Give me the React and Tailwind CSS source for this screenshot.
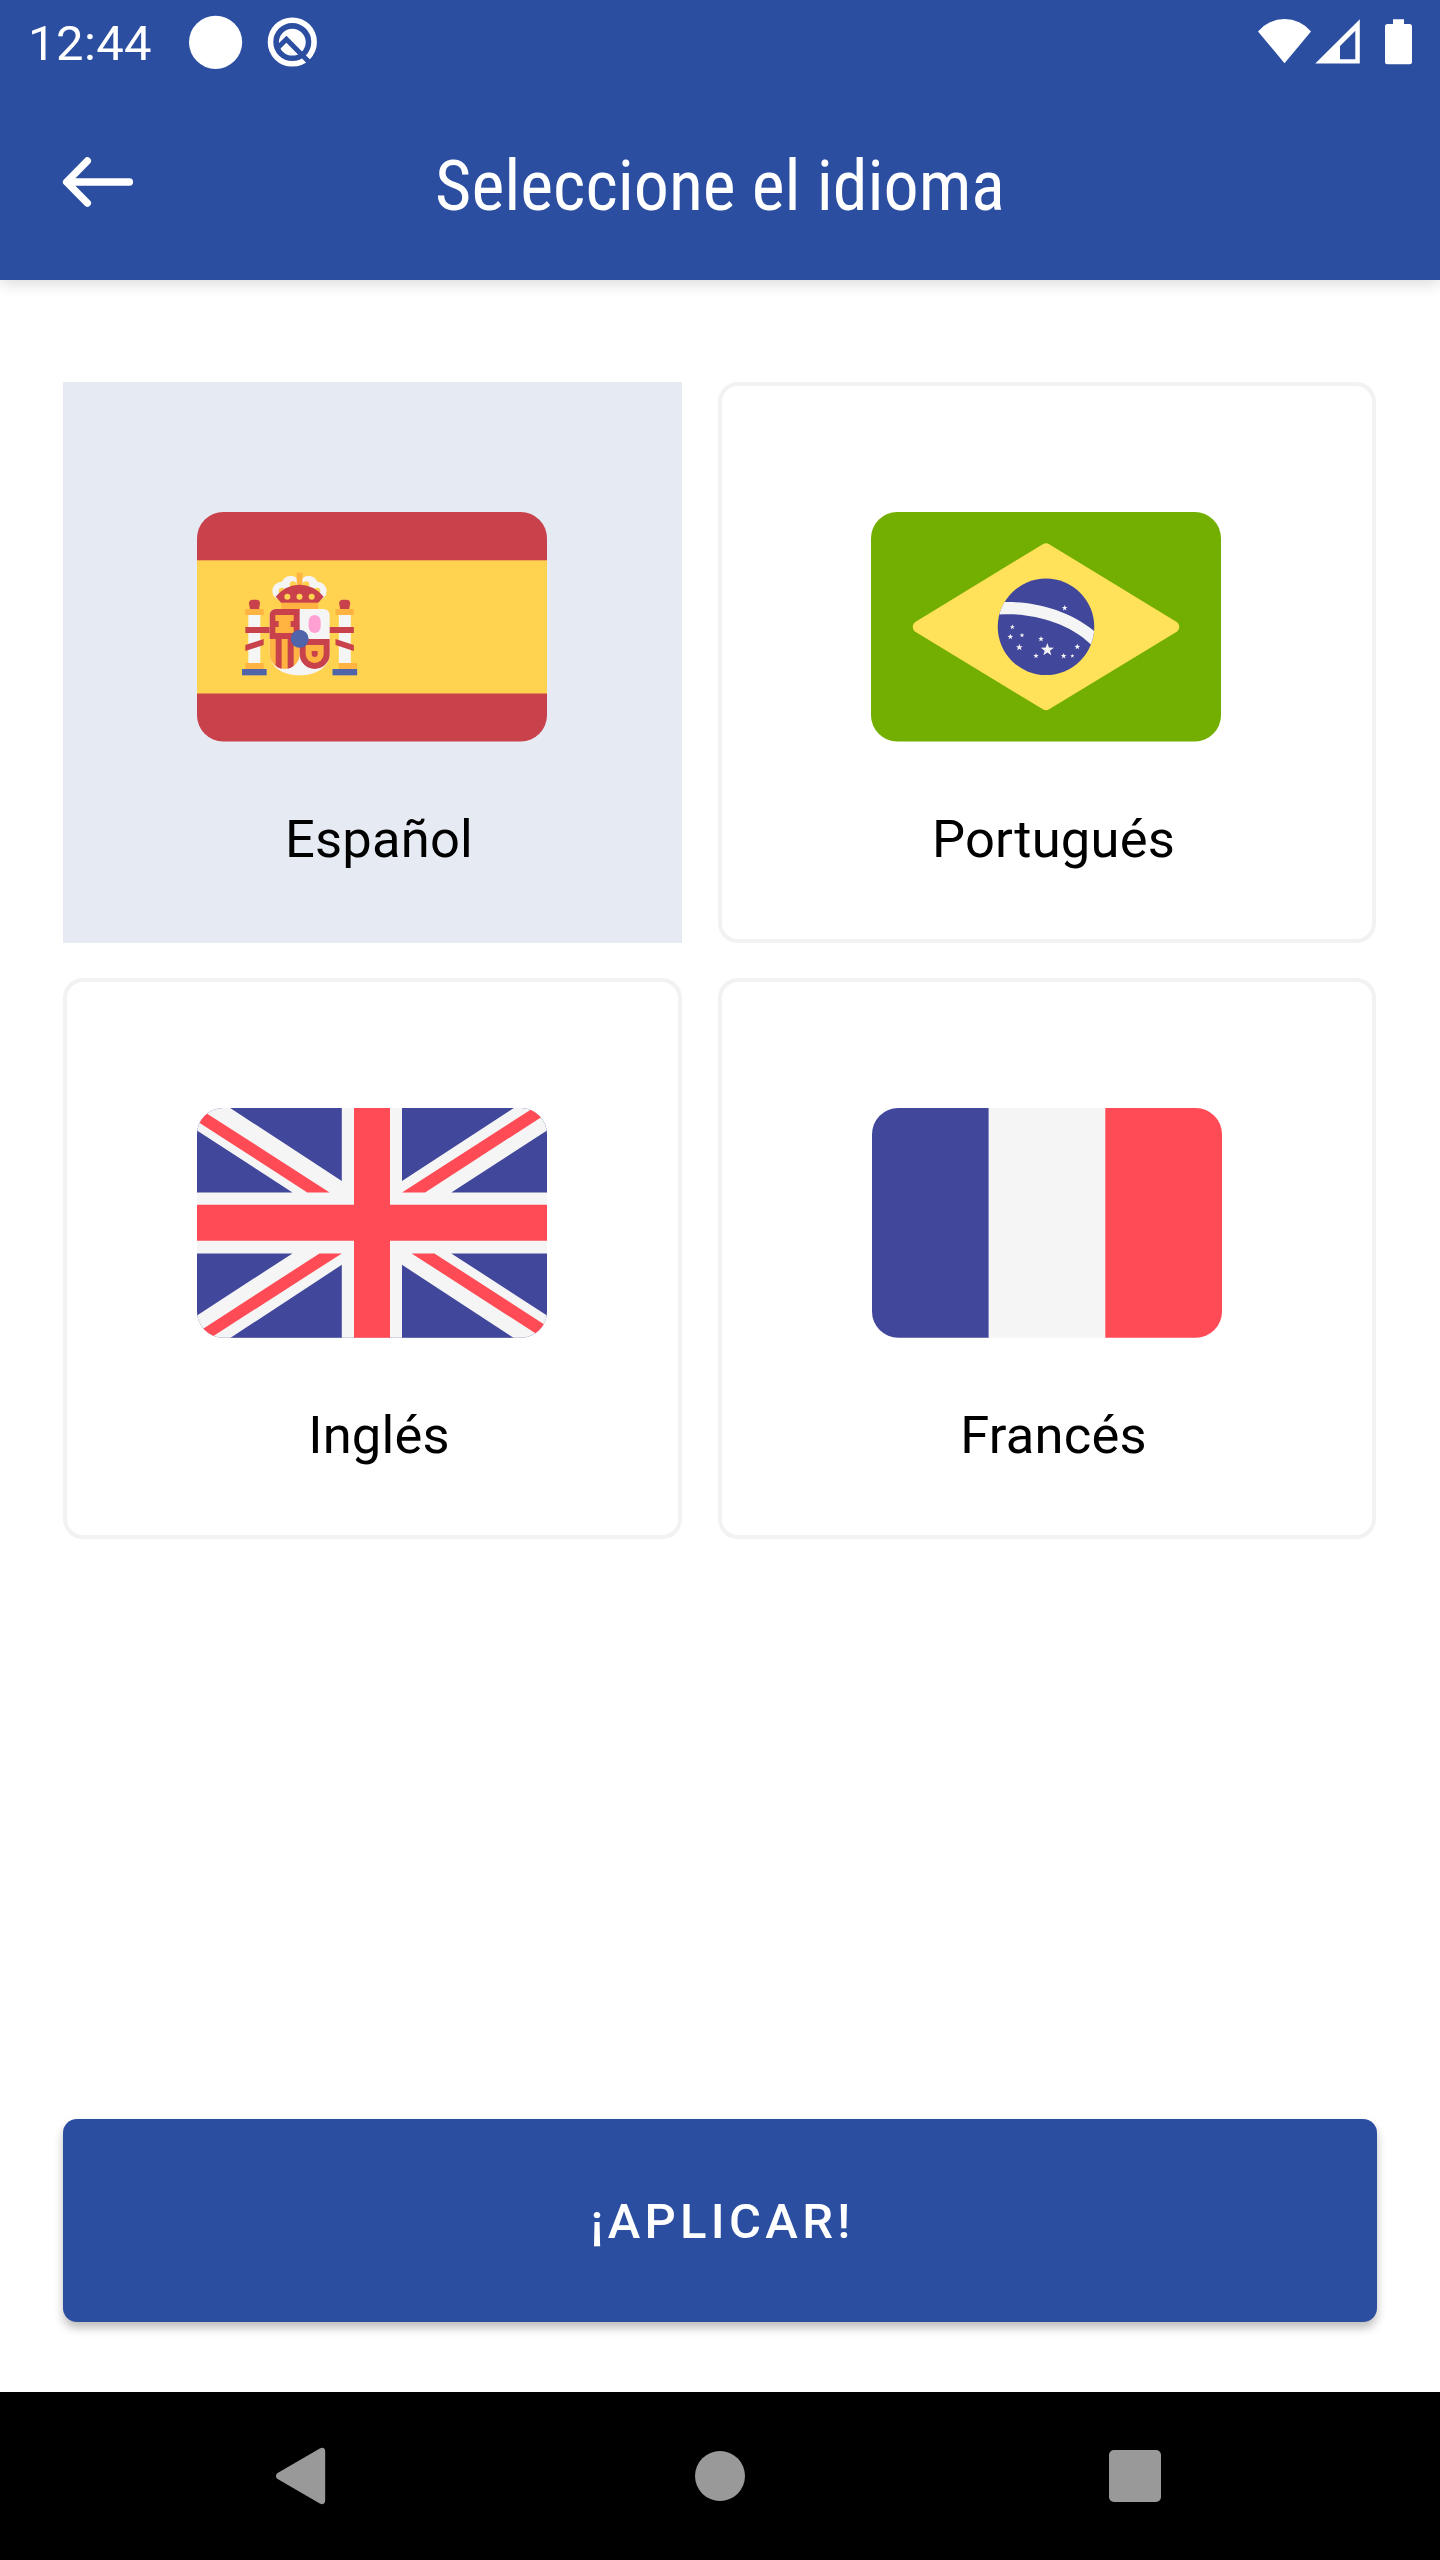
function StatusBar() {
  return (
    <div className="flex h-[84px] items-start pr-[28px] pl-[28px]">
      <span className="mt-[15px] w-[161px] text-[49px] leading-[58px] tracking-[0.4px]">12:44</span>
      <svg className="mt-[15px] h-[54px] w-[54px]" viewBox="0 0 54 54" fill="currentColor">
        <circle cx="26.6" cy="27.3" r="26.6" />
      </svg>
      <svg className="mt-[15px] ml-[23px] h-[54px] w-[54px]" viewBox="266 15 54 54" fill="none">
        <circle cx="292.3" cy="42" r="21.8" stroke="currentColor" strokeWidth="5.6" />
        <circle cx="292.3" cy="42.2" r="13.4" fill="currentColor" />
        <path d="M277.5 48 L286.4 39.2 L311 64" stroke="#2b4ea1" strokeWidth="5" />
      </svg>
      <svg className="mt-[15px] ml-auto h-[54px] w-[156px]" viewBox="1256 15 156 54" fill="currentColor">
        <path d="M1284.5 63.3 L1258 31.4 A34.7 34.7 0 0 1 1311 31.4 Z" />
        <path
          fillRule="evenodd"
          d="M1315.3 63.5 L1359.8 19.3 V63.5 Z M1340 46 V59.2 H1355.3 V30.7 Z"
        />
        <path d="M1393 19.3 H1404 V24 H1409.5 A2.5 2.5 0 0 1 1412 26.5 V61.8 A2.5 2.5 0 0 1 1409.5 64.3 H1387.5 A2.5 2.5 0 0 1 1385 61.8 V26.5 A2.5 2.5 0 0 1 1387.5 24 H1393 Z" />
      </svg>
    </div>
  );
}

function AppBar() {
  return (
    <div className="grid h-[196px] grid-cols-[80px_1fr_80px] items-start px-[60px]">
      <svg
        className="mt-[70px] h-[56px] w-[76px]"
        viewBox="60 154 76 56"
        fill="none"
        stroke="currentColor"
        strokeWidth="7.4"
        strokeLinecap="round"
        strokeLinejoin="round"
      >
        <path d="M129.4 182 H67 M87.3 161 L66.6 182 L87.3 203" />
      </svg>
      <h1 className="mt-[61px] text-center text-[70px] leading-[82px] whitespace-nowrap [font-family:'Roboto_Condensed',Roboto,sans-serif] [font-stretch:75%]">
        Seleccione el idioma
      </h1>
    </div>
  );
}

function Pillar({ mirrored }) {
  return (
    <g transform={mirrored ? "translate(477.5 0) scale(-1 1)" : undefined}>
      <path fill="#C8414B" d="M90 178 L87 160 Q87 149 98 149 H109 Q120 149 120 160 L117 178 Z" />
      <rect x="85" y="195" width="36" height="145" fill="#F5F5F5" />
      <rect x="76" y="177" width="55" height="18" fill="#FFB441" />
      <rect x={mirrored ? 66 : 76} y="339" width="55" height="18" fill="#FFB441" />
      <rect x="66" y="357" width="74" height="19" fill="#5064AA" />
      <rect x="76" y="231" width="74" height="18" fill="#C8414B" />
      <path fill="#C8414B" d="M76 285 L131 267 V285 L76 303 Z" />
    </g>
  );
}

function SpainFlag() {
  return (
    <svg className="h-[230px] w-[350px]" viewBox="0 0 350 230">
      <clipPath id="es-clip">
        <rect y="0.1" width="350" height="229.4" rx="26.2" />
      </clipPath>
      <g clipPath="url(#es-clip)">
        <rect width="350" height="230" fill="#C8414B" />
        <rect y="48.3" width="350" height="133.2" fill="#FFD250" />
      </g>
      <g transform="translate(23 38) scale(0.33333)">
        <Pillar />
        <Pillar mirrored />
        <g fill="#F5F5F5">
          <circle cx="185" cy="123" r="28" />
          <circle cx="212" cy="105" r="28" />
          <circle cx="266" cy="105" r="28" />
          <circle cx="292" cy="123" r="28" />
        </g>
        <g fill="#FFD250">
          <circle cx="186" cy="123" r="10" />
          <circle cx="219" cy="104" r="10" />
          <circle cx="258" cy="104" r="10" />
          <circle cx="291" cy="123" r="10" />
        </g>
        <rect x="230" y="68" width="17.5" height="40" fill="#FFB441" />
        <path fill="#C8414B" d="M167 140 Q197 104 238.5 104 Q281 104 311 140 L294 159 H184 Z" />
        <g fill="#FFD250">
          <circle cx="202" cy="140" r="9" />
          <circle cx="238.5" cy="140" r="9" />
          <circle cx="275" cy="140" r="9" />
        </g>
        <rect x="184" y="158" width="110" height="20" fill="#FFB441" />
        <path
          fill="#F5F5F5"
          d="M166 177 H311 A18 18 0 0 1 329 195 V312 C329 350 290 376 239 376 C188 376 149 350 149 312 V195 A18 18 0 0 1 166 177 Z"
        />
        <path fill="#C8414B" d="M167 177 H239 V267 H149 V195 A18 18 0 0 1 167 177 Z" />
        <path
          fill="#FFB441"
          d="M166 195 H221 V213 H212 V231 H221 V249 H166 V231 H176 V213 H166 Z"
        />
        <rect x="266" y="195" width="36" height="54" rx="18" fill="#FFA0D2" />
        <path fill="#FFB441" d="M149 267 H239 V312 A45 45 0 0 1 149 312 Z" />
        <path
          fill="#C8414B"
          d="M167 267 H185 V356 Q175 354 167 347 Z M203 267 H221 V347 Q213 354 203 356 Z"
        />
        <path fill="#C8414B" d="M239 267 H329 V312 A45 45 0 0 1 239 312 Z" />
        <path fill="#FFB441" d="M257 285 H311 V312 A27 27 0 0 1 257 312 Z" />
        <path fill="#C8414B" d="M275 303 H293 V312 A9 9 0 0 1 275 312 Z" />
        <circle cx="239" cy="266.5" r="27" fill="#5064AA" />
      </g>
    </svg>
  );
}

const STARS = [
  [314, 144, 9],
  [157, 201, 8],
  [151, 230.5, 9],
  [186, 226, 7.5],
  [178, 262, 11],
  [243, 237, 9],
  [262, 269.5, 20.5],
  [228, 287.5, 8.5],
  [311, 288, 9],
  [337, 288, 6.5],
  [352, 260.5, 9],
];

function starPoints([cx, cy, r]) {
  return Array.from({ length: 10 }, (_, i) => {
    const radius = i % 2 ? r * 0.4 : r;
    const angle = (Math.PI * i) / 5;
    return `${(cx + radius * Math.sin(angle)).toFixed(2)},${(cy - radius * Math.cos(angle)).toFixed(2)}`;
  }).join(" ");
}

function BrazilFlag() {
  return (
    <svg className="mr-px h-[230px] w-[350px]" viewBox="0 0 350 230">
      <rect y="0.1" width="350" height="229.4" rx="26.2" fill="#73AF00" />
      <g transform="translate(0 -60.2) scale(0.68359)">
        <path
          fill="#FFE15A"
          d="M251.41,135.209L65.354,248.46c-5.651,3.439-5.651,11.641,0,15.081L251.41,376.791c2.819,1.716,6.362,1.716,9.18,0l186.057-113.25c5.651-3.439,5.651-11.641,0-15.081L260.59,135.209C257.771,133.493,254.229,133.493,251.41,135.209z"
        />
        <circle cx="256" cy="256" r="70.6" fill="#41479B" />
        <path
          fill="#F5F5F5"
          d="M195.401,219.874c-3.332,5.578-5.905,11.64-7.605,18.077c39.149-2.946,97.062,8.006,133.922,43.773c2.406-6.141,3.994-12.683,4.59-19.522C288.247,230.169,235.628,218.778,195.401,219.874z"
        />
      </g>
      <g transform="translate(89 48) scale(0.33333)" fill="#F5F5F5">
        {STARS.map((star) => (
          <polygon key={star.join()} points={starPoints(star)} />
        ))}
      </g>
    </svg>
  );
}

function UnitedKingdomFlag() {
  return (
    <svg className="h-[230px] w-[350px]" viewBox="0 0 350 230">
      <clipPath id="gb-clip">
        <rect y="0.1" width="350" height="229.6" rx="26.2" />
      </clipPath>
      <rect y="0.1" width="350" height="229.6" rx="26.2" fill="#41479B" />
      <g clipPath="url(#gb-clip)">
        <rect width="350" height="230" fill="#F5F5F5" />
        <path
          fill="#41479B"
          d="M33.2 0 H144.8 V73.1 Z M0 22.6 L95.5 84.4 H0 Z M316.8 0 H205 V73.1 Z M350 22.6 L254.3 84.4 H350 Z M0 207.4 L95.5 145.4 H0 Z M33.2 230 H144.8 V156.8 Z M350 207.4 L254.3 145.4 H350 Z M316.8 230 H205 V156.8 Z"
        />
        <path
          fill="#FF4B55"
          d="M-10 -7.2 L132.6 84.4 H110.3 L-10 6.9 Z M360 -15.2 L205 84.4 H228.1 L360 -1.1 Z M-10 231.2 L122.5 145.4 H144.8 L-10 245 Z M360 224.7 L237.4 145.4 H214.6 L360 239.2 Z"
        />
        <path fill="#FF4B55" d="M157 0 H193 V96.8 H350 V132.8 H193 V230 H157 V132.8 H0 V96.8 H157 Z" />
      </g>
    </svg>
  );
}

function FranceFlag() {
  return (
    <svg className="ml-px h-[230px] w-[350px]" viewBox="0 0 350 230">
      <clipPath id="fr-clip">
        <rect y="0.1" width="350" height="229.6" rx="26.2" />
      </clipPath>
      <g clipPath="url(#fr-clip)">
        <rect width="117" height="230" fill="#41479B" />
        <rect x="116.6" width="117" height="230" fill="#F5F5F5" />
        <rect x="233.3" width="117" height="230" fill="#FF4B55" />
      </g>
    </svg>
  );
}

const LANGUAGES = [
  { name: "Español", Flag: SpainFlag, selected: true },
  { name: "Portugués", Flag: BrazilFlag },
  { name: "Inglés", Flag: UnitedKingdomFlag },
  { name: "Francés", Flag: FranceFlag },
];

function LanguageCard({ name, Flag, selected }) {
  return (
    <button
      type="button"
      className={
        selected
          ? "flex h-[561px] flex-col items-center border-4 border-[#e6eaf2] bg-[#e6eaf2] pt-[126px]"
          : "flex h-[561px] flex-col items-center rounded-[20px] border-4 border-[#f2f2f2] bg-white pt-[126px]"
      }
    >
      <span className="mr-px block">
        <Flag />
      </span>
      <span className="mt-[66px] pl-[13px] text-[52.5px] leading-[62px] tracking-[0.2px] text-black">
        {name}
      </span>
    </button>
  );
}

function NavigationBar() {
  return (
    <nav className="flex h-[168px] items-center bg-black pr-[279px] pl-[275px] text-[#999999]">
      <svg className="h-[58px] w-[52px]" viewBox="0 0 52 58" fill="currentColor">
        <path d="M2.2 26.2 L44.8 1.4 Q50.2 -0.6 50.2 5 V53 Q50.2 58.6 44.8 56.6 L2.2 31.8 Q-0.4 29 2.2 26.2 Z" />
      </svg>
      <span className="ml-[368px] h-[50px] w-[50px] rounded-full bg-[#999999]" />
      <span className="ml-auto h-[52px] w-[52px] rounded-[5px] bg-[#999999]" />
    </nav>
  );
}

export default function App() {
  return (
    <div className="flex h-[2560px] w-[1440px] flex-col bg-white [font-family:Roboto,sans-serif]">
      <header className="h-[280px] bg-[#2b4ea1] text-white shadow-[0_4px_14px_rgba(0,0,0,0.14)]">
        <StatusBar />
        <AppBar />
      </header>
      <main className="flex flex-1 flex-col px-[63px] pt-[102px] pb-[70px]">
        <div className="grid grid-cols-[619px_658px] gap-x-[36px] gap-y-[35px]">
          {LANGUAGES.map((language) => (
            <LanguageCard key={language.name} {...language} />
          ))}
        </div>
        <button
          type="button"
          className="mt-auto h-[203px] w-[1314px] rounded-[14px] bg-[#2b4ea1] pt-[3px] pl-[5px] text-[49px] font-medium tracking-[4.3px] text-white shadow-[0_6px_10px_rgba(0,0,0,0.26)]"
        >
          ¡APLICAR!
        </button>
      </main>
      <NavigationBar />
    </div>
  );
}
